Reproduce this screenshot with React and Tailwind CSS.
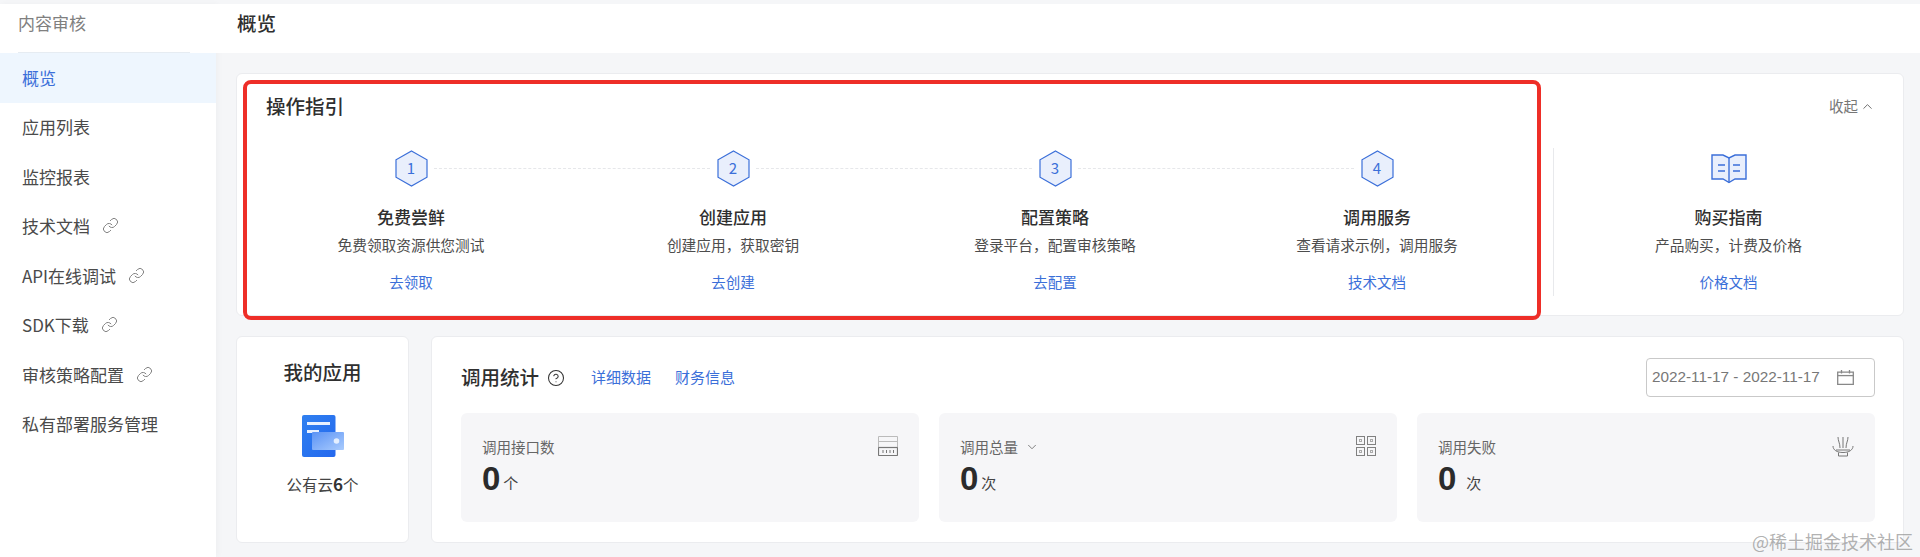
import React from 'react';
import { Link, CircleHelp, ChevronUp, ChevronDown } from 'lucide-react';

const menu = [
  { label: '概览', active: true },
  { label: '应用列表' },
  { label: '监控报表' },
  { label: '技术文档', link: true },
  { label: 'API在线调试', link: true },
  { label: 'SDK下载', link: true },
  { label: '审核策略配置', link: true },
  { label: '私有部署服务管理' },
];

const steps = [
  { n: 1, title: '免费尝鲜', desc: '免费领取资源供您测试', action: '去领取' },
  { n: 2, title: '创建应用', desc: '创建应用，获取密钥', action: '去创建' },
  { n: 3, title: '配置策略', desc: '登录平台，配置审核策略', action: '去配置' },
  { n: 4, title: '调用服务', desc: '查看请求示例，调用服务', action: '技术文档' },
];

const Hexagon = ({ n }) => (
  <div className="relative w-[33px] h-[37px] flex items-center justify-center">
    <svg className="absolute inset-0" width="33" height="37" viewBox="0 0 33 37">
      <path d="M16.5 1 L32 9.8 V27.2 L16.5 36 L1 27.2 V9.8 Z" fill="#e9effc" stroke="#3b6fd9" strokeWidth="1.2" />
    </svg>
    <span className="relative text-[15px] text-[#3b6fd9]">{n}</span>
  </div>
);

const BookIcon = () => (
  <svg width="36" height="31" viewBox="0 0 36 31" fill="none">
    <path d="M1 2 H12 L18 5 L24 2 H35 V26 H24 L18 29.5 L12 26 H1 Z" fill="#e9effc" stroke="#3b6fd9" strokeWidth="1.4" />
    <path d="M18 5 V29.5" stroke="#3b6fd9" strokeWidth="1.4" />
    <path d="M7 12 H14 M7 18 H14 M22 12 H29 M22 18 H29" stroke="#3b6fd9" strokeWidth="1.4" />
  </svg>
);

const CloudAppIcon = () => (
  <svg width="42" height="42" viewBox="0 0 42 42" fill="none">
    <defs>
      <linearGradient id="docFill" x1="0" y1="0" x2="1" y2="1">
        <stop offset="0" stopColor="#2f80f0" />
        <stop offset="1" stopColor="#2468ee" />
      </linearGradient>
      <linearGradient id="walletFill" x1="0" y1="0" x2="1" y2="1">
        <stop offset="0" stopColor="#5b93f5" />
        <stop offset="1" stopColor="#a9cbfd" />
      </linearGradient>
    </defs>
    <rect x="0" y="0" width="33.5" height="42" rx="2" fill="url(#docFill)" />
    <rect x="5" y="7" width="23" height="3" fill="#e8f1ff" />
    <rect x="5" y="15" width="12" height="3" fill="#e8f1ff" />
    <rect x="10" y="17" width="32" height="18" rx="1" fill="url(#walletFill)" />
    <circle cx="34.5" cy="26" r="2.8" fill="#e4efff" />
  </svg>
);

const ChannelIcon = () => (
  <svg width="20" height="20" viewBox="0 0 20 20" fill="none" stroke="#777" strokeWidth="1">
    <path d="M0.5 0.5 H19.5 V19.5 H0.5 Z" stroke="#bbb" />
    <path d="M0.5 5.5 H19.5" stroke="#bbb" />
    <path d="M0.5 11.5 H19.5" strokeWidth="1.2" />
    <path d="M0.5 19.5 H19.5 M0.5 11.5 V19.5 M19.5 11.5 V19.5" strokeWidth="1.2" />
    <path d="M5 14 V17 M8.5 14 V17 M12 14 V17 M15.5 14 V17" />
  </svg>
);

const GridIcon = () => (
  <svg width="20" height="20" viewBox="0 0 20 20" fill="none" stroke="#808080" strokeWidth="1">
    <rect x="0.5" y="0.5" width="8" height="8" />
    <rect x="11.5" y="0.5" width="8" height="8" />
    <rect x="0.5" y="11.5" width="8" height="8" />
    <rect x="11.5" y="11.5" width="8" height="8" />
    <rect x="3.5" y="3.5" width="2" height="2" stroke="#aaa" />
    <rect x="14.5" y="3.5" width="2" height="2" stroke="#aaa" />
    <rect x="3.5" y="14.5" width="2" height="2" stroke="#aaa" />
    <rect x="14.5" y="14.5" width="2" height="2" stroke="#aaa" />
  </svg>
);

const BowlIcon = () => (
  <svg width="22" height="21" viewBox="0 0 22 21" fill="none" stroke="#777" strokeWidth="1">
    <path d="M11 1 V12 M6 1 C6 5 8 7 8 12 M16 1 C16 5 14 7 14 12" />
    <path d="M1 10 C1 14 5 16.5 11 16.5 C17 16.5 21 14 21 10" />
    <path d="M4 14 H18" />
    <path d="M6.5 20 H15.5 M6.5 16.5 V20 M15.5 16.5 V20" />
  </svg>
);

const CalendarIcon = () => (
  <svg width="17" height="15" viewBox="0 0 17 15" fill="none" stroke="#888" strokeWidth="1.3">
    <path d="M0.7 2.2 H16.3 V14.3 H0.7 Z" />
    <path d="M0.7 5.6 H16.3" />
    <path d="M4.5 0 V3.6 M12.5 0 V3.6" />
  </svg>
);

const Step = ({ n, title, desc, action, connector }) => (
  <div className="relative flex flex-col items-center">
    {connector && (
      <div className="absolute top-[18px] left-[calc(50%+23px)] w-[276px] border-t border-dashed border-[#e6e7ea]" />
    )}
    <Hexagon n={n} />
    <StepText title={title} desc={desc} action={action} />
  </div>
);

const StepText = ({ title, desc, action }) => (
  <>
    <p className="mt-[18px] text-[17px] leading-6 font-medium text-[#2f2f2f]">{title}</p>
    <p className="mt-[5px] text-[14.7px] leading-[22px] text-[#4d4d4d]">{desc}</p>
    <a className="mt-[15px] text-[14.5px] leading-[22px] text-[#3b6fd9]">{action}</a>
  </>
);

const StatTile = ({ label, unit, icon: Icon, spaced, dropdown }) => (
  <div className="relative h-[109px] rounded-md bg-[#f6f6f8] pl-[21px] pr-[21px] pt-[23px] flex justify-between">
    <div>
      <div className="flex items-center h-[22px] text-[14.5px] text-[#666]">
        {label}
        {dropdown && <ChevronDown size={14} strokeWidth={1.4} className="ml-[7px] text-[#666]" />}
      </div>
      <div className="flex items-end h-[34px] mt-[4px] text-[#2b2b2b]">
        <span className="text-[33px] leading-[34px] font-bold font-['Liberation_Sans',sans-serif]">0</span>
        <span className={`${spaced ? 'ml-[10px]' : 'ml-[3px]'} text-[15px] leading-[26px] text-[#444]`}>{unit}</span>
      </div>
    </div>
    <Icon />
  </div>
);

export default function App() {
  return (
    <div className="relative w-[1920px] h-[557px] overflow-hidden flex bg-[#f5f6f8] pt-1 font-['Noto_Sans_CJK_SC','Noto_Sans',sans-serif]">
      {/* Sidebar */}
      <aside className="w-[216px] shrink-0 bg-white shadow-[2px_0_6px_rgba(0,0,0,0.03)]">
        <div className="ml-[18px] w-[172px] h-[49px] border-b border-[#e6ecf2] text-[17px] leading-[38px] text-[#808080]">内容审核</div>
        <nav>
          {menu.map((item) => (
            <div
              key={item.label}
              className={`h-[49.5px] pl-[22px] pb-[1px] flex items-center text-[17px] ${
                item.active ? 'bg-[#eef6fe] text-[#3b6fd9]' : 'text-[#4a4a4a]'
              }`}
            >
              {item.label}
              {item.link && <Link size={17} strokeWidth={1.3} className="ml-3 text-[#777]" />}
            </div>
          ))}
        </nav>
      </aside>

      {/* Main */}
      <main className="flex-1 min-w-0">
        <header className="h-[49px] bg-white pl-[21px] text-[19.5px] leading-[38px] font-medium text-[#2f2f2f]">概览</header>

        <div className="pl-[20px] pr-[16px] pt-[20px]">
          {/* Guide card */}
          <section className="relative h-[243px] rounded-md bg-white border border-[#ebecef]">
            <div className="flex items-center justify-between pl-[29px] pr-[28px] pt-[18px]">
              <h2 className="text-[19.5px] leading-7 font-medium text-[#2f2f2f]">操作指引</h2>
              <button className="flex items-center text-[14.5px] text-[#777]">
                收起
                <ChevronUp size={15} strokeWidth={1.5} className="ml-[2px] text-[#666]" />
              </button>
            </div>
            <div className="flex mt-7 pl-[13px]">
              <div className="grid grid-cols-4 w-[1288px] pt-[2px]">
                {steps.map((s, i) => (
                  <Step key={s.n} {...s} connector={i < 3} />
                ))}
              </div>
              <div className="ml-[15px] flex-1 h-[148px] border-l border-[#e8e9ec] pt-[2px] flex flex-col items-center">
                <div className="h-[37px] flex items-center">
                  <BookIcon />
                </div>
                <StepText title="购买指南" desc="产品购买，计费及价格" action="价格文档" />
              </div>
            </div>
            {/* Red annotation box drawn over the card */}
            <div className="absolute left-[6px] top-[6px] w-[1298px] h-[240px] rounded-lg border-[4px] border-[#ee2e28] pointer-events-none" />
          </section>

          <div className="flex gap-[22px] mt-[20px] h-[207px]">
            {/* My apps */}
            <section className="w-[173px] rounded-md bg-white border border-[#ebecef] flex flex-col items-center pt-[21px]">
              <h2 className="text-[19.5px] leading-7 font-medium text-[#2f2f2f]">我的应用</h2>
              <div className="mt-[29px]">
                <CloudAppIcon />
              </div>
              <p className="mt-[16px] text-[15.5px] leading-[22px] text-[#444]">
                公有云<span className="font-bold text-[17px] text-[#333]">6</span>个
              </p>
            </section>

            {/* Call stats */}
            <section className="flex-1 rounded-md bg-white border border-[#ebecef] pl-[29px] pr-[28px] pt-[21px]">
              <div className="flex items-center justify-between h-[39px]">
                <div className="flex items-center">
                  <h2 className="pb-[2px] text-[19.5px] leading-7 font-medium text-[#2f2f2f]">调用统计</h2>
                  <CircleHelp size={18} strokeWidth={1.4} className="ml-2 text-[#333]" />
                  <a className="ml-[26px] text-[15px] text-[#3b6fd9]">详细数据</a>
                  <a className="ml-[24px] text-[15px] text-[#3b6fd9]">财务信息</a>
                </div>
                <div className="w-[229px] h-[39px] rounded border border-[#c9c9c9] pl-[5px] pr-[20px] flex items-center justify-between">
                  <span className="text-[15.3px] text-[#777] font-['Liberation_Sans',sans-serif]">2022-11-17 - 2022-11-17</span>
                  <CalendarIcon />
                </div>
              </div>
              <div className="grid grid-cols-3 gap-[20px] mt-4">
                <StatTile label="调用接口数" unit="个" icon={ChannelIcon} />
                <StatTile label="调用总量" unit="次" icon={GridIcon} dropdown />
                <StatTile label="调用失败" unit="次" icon={BowlIcon} spaced />
              </div>
            </section>
          </div>
        </div>
      </main>

      {/* Site watermark */}
      <span className="absolute right-[7px] bottom-[4px] text-[18px] leading-6 text-[#8f8f8f]/70">@稀土掘金技术社区</span>
    </div>
  );
}
